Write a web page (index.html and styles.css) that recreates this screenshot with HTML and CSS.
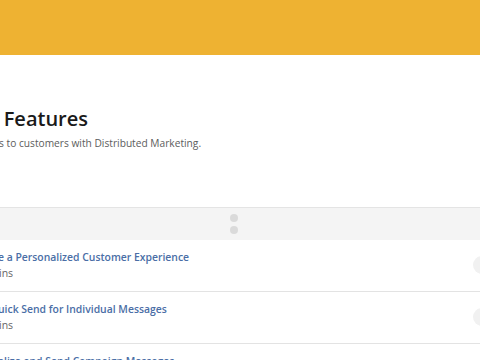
FILE: index.html
```html
<!DOCTYPE html>
<html>
<head>
<meta charset="utf-8">
<link rel="stylesheet" href="styles.css">
</head>
<body>
<div class="banner"></div>
<div class="intro">
  <h1 class="title">e Features</h1>
  <p class="subtitle">s to customers with Distributed Marketing.</p>
</div>
<div class="handle-bar">
  <span class="dot"></span>
  <span class="dot"></span>
</div>
<ul class="list">
  <li class="row">
    <div class="row-text">
      <a class="row-title">e a Personalized Customer Experience</a>
      <div class="row-meta">ins</div>
    </div>
    <span class="status"></span>
  </li>
  <li class="row">
    <div class="row-text">
      <a class="row-title">uick Send for Individual Messages</a>
      <div class="row-meta">ins</div>
    </div>
    <span class="status"></span>
  </li>
  <li class="row">
    <div class="row-text">
      <a class="row-title">alize and Send Campaign Messages</a>
      <div class="row-meta">ins</div>
    </div>
    <span class="status"></span>
  </li>
</ul>
</body>
</html>
```
FILE: styles.css
```css
html, body {
  margin: 0;
  padding: 0;
  background: #ffffff;
  overflow: hidden;
  font-family: "Open Sans", "Noto Sans", sans-serif;
}
.banner {
  height: 55px;
  background: #eeb232;
}
.intro {
  padding-top: 51px;
  height: 101px;
}
.title {
  margin: 0 0 0 -13px;
  font-size: 20px;
  line-height: 26px;
  font-weight: 600;
  color: #1a1a1a;
}
.subtitle {
  margin: 3px 0 0 -1px;
  font-size: 10.2px;
  line-height: 16px;
  color: #5c5c5c;
}
.handle-bar {
  border-top: 1px solid #e4e4e4;
  background: #f4f4f4;
  height: 32px;
  display: flex;
  flex-direction: column;
  align-items: center;
  justify-content: center;
  gap: 4px;
  padding-right: 12px;
}
.dot {
  width: 8px;
  height: 8px;
  border-radius: 50%;
  background: #dadada;
}
.list {
  list-style: none;
  margin: 0;
  padding: 0;
}
.row {
  display: flex;
  align-items: center;
  justify-content: space-between;
  padding: 9px 0 10px;
  height: 32px;
  border-bottom: 1px solid #e3e3e3;
}
.row-text {
  display: flex;
  flex-direction: column;
  margin-left: -2px;
}
.row-title {
  font-size: 10.4px;
  line-height: 16px;
  font-weight: 600;
  color: #4a6ea6;
}
.row-meta {
  margin-left: 1px;
  font-size: 10.5px;
  line-height: 16px;
  color: #666666;
}
.status {
  width: 18px;
  height: 18px;
  border-radius: 50%;
  background: #f1f1f1;
  margin-right: -11px;
}
```
